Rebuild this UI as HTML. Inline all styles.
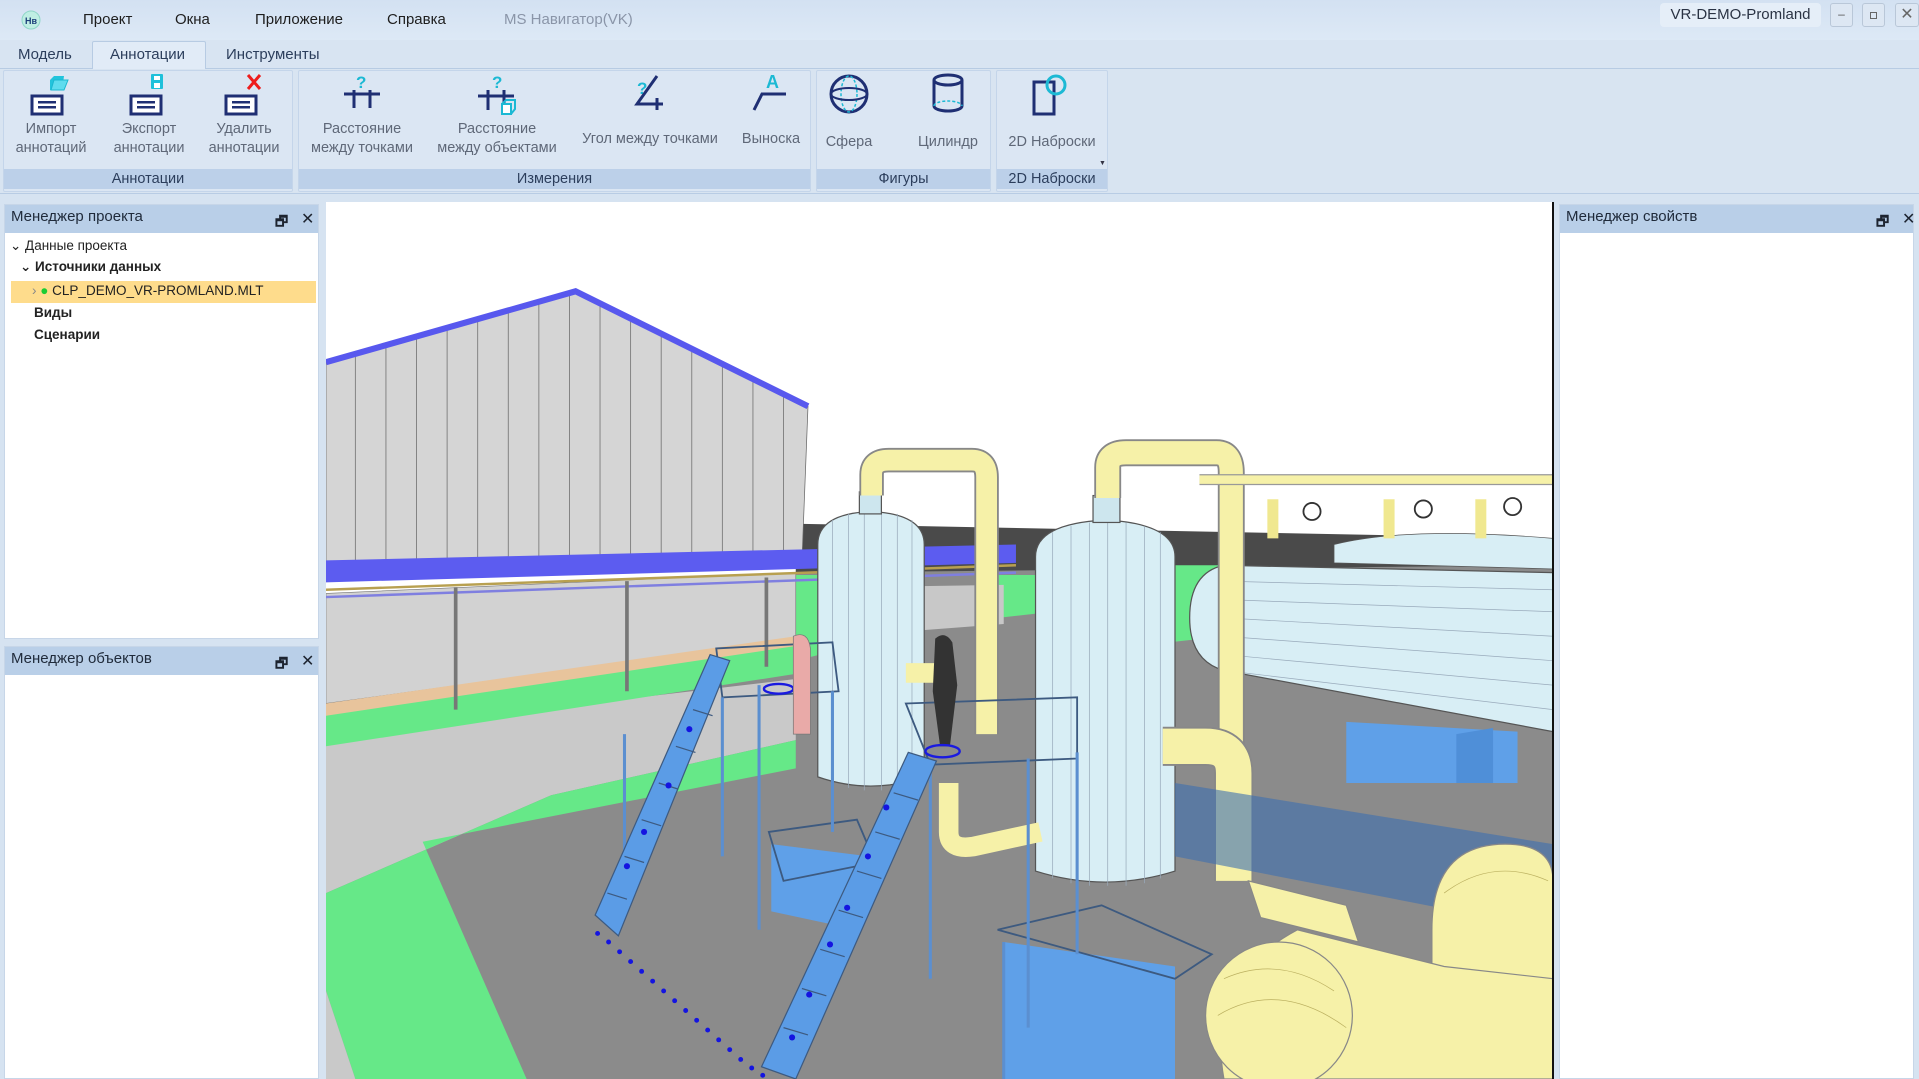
<!DOCTYPE html>
<html><head><meta charset="utf-8">
<style>
*{box-sizing:border-box;margin:0;padding:0}
body{width:1919px;height:1079px;overflow:hidden;background:#d6e3f1;font-family:"Liberation Sans","DejaVu Sans",sans-serif;position:relative;color:#222}
.abs{position:absolute}
#title{left:0;top:0;width:1919px;height:40px;background:linear-gradient(#d3e1f2,#dde9f6)}
.menu{top:11px;font-size:15px;color:#1e1e1e}
#tabs{left:0;top:40px;width:1919px;height:29px;background:#d8e4f2;border-bottom:1px solid #b7cbe3}
.tab{top:46px;font-size:15px;color:#2c3e5c}
#ribbon{left:0;top:69px;width:1919px;height:125px;background:#d8e4f1;border-bottom:1px solid #b8cce4}
.grp{top:70px;height:122px;background:#dbe6f3;border:1px solid #c4d5ea;border-radius:2px}
.glab{position:absolute;left:0;right:0;bottom:2px;height:20px;background:#bcd0e9;text-align:center;font-size:14.5px;color:#2c3e5c;line-height:20px}
.btn{position:absolute;text-align:center;font-size:14.5px;color:#5f6878;line-height:19px;white-space:nowrap}
.ic{position:absolute}
.phead{background:#b9cfe8;height:28px;font-size:15px;color:#1f2a3a;line-height:24px;padding-left:6px}
.pbtn{position:absolute;top:6px;font-size:14px;font-weight:bold;color:#1d2430}
.tree{font-size:13.5px;position:absolute;white-space:nowrap}
</style></head><body>
<div id="title" class="abs"></div>
<svg class="abs" style="left:21px;top:10px" width="20" height="20"><circle cx="10" cy="10" r="9" fill="#bfeee3" stroke="#8fd6c8"/><text x="4" y="14" font-size="9" fill="#1b3e7a" font-family="Liberation Sans" font-weight="bold">Hв</text></svg>
<div class="abs menu" style="left:83px">Проект</div>
<div class="abs menu" style="left:175px">Окна</div>
<div class="abs menu" style="left:255px">Приложение</div>
<div class="abs menu" style="left:387px">Справка</div>
<div class="abs menu" style="left:504px;color:#8a95a8">MS Навигатор(VK)</div>
<div class="abs" style="left:1660px;top:3px;width:161px;height:24px;background:#e5eef8;border-radius:4px;font-size:15px;line-height:24px;text-align:center;color:#2a3344">VR-DEMO-Promland</div>
<div class="abs" style="left:1830px;top:3px;width:23px;height:24px;border:1px solid #b9c7d8;border-radius:3px;background:#dde7f3;text-align:center;font-size:12px;line-height:20px;color:#555">–</div>
<div class="abs" style="left:1862px;top:3px;width:23px;height:24px;border:1px solid #b9c7d8;border-radius:3px;background:#dde7f3"><div style="margin:8px auto;width:7px;height:7px;border:1px solid #666"></div></div>
<div class="abs" style="left:1895px;top:3px;width:24px;height:24px;border:1px solid #b9c7d8;border-radius:3px;background:#dde7f3;text-align:center;font-size:16px;line-height:22px;color:#666">✕</div>

<div id="tabs" class="abs"></div>
<div class="abs" style="left:92px;top:41px;width:114px;height:29px;background:#e1ebf7;border:1px solid #b7cbe3;border-bottom:none;border-radius:2px 2px 0 0"></div>
<div class="abs tab" style="left:18px">Модель</div>
<div class="abs tab" style="left:110px">Аннотации</div>
<div class="abs tab" style="left:226px">Инструменты</div>

<div id="ribbon" class="abs"></div>
<div class="abs grp" style="left:3px;width:290px"><div class="glab">Аннотации</div></div>
<div class="abs grp" style="left:298px;width:513px"><div class="glab">Измерения</div></div>
<div class="abs grp" style="left:816px;width:175px"><div class="glab">Фигуры</div></div>
<div class="abs grp" style="left:996px;width:112px"><div class="glab">2D Наброски</div></div>

<!-- annotation icons -->
<svg class="ic" style="left:26px;top:72px" width="50" height="45"><path d="M24 8 L28 4 L38 4 L36 18 L24 18 Z" fill="#22c4dc"/><path d="M28 8 L42 8 L38 18 L25 18Z" fill="#5fdcee" stroke="#1bb8d0"/><rect x="6" y="24" width="30" height="18" fill="#fff" stroke="#1f2f73" stroke-width="3"/><rect x="12" y="29" width="18" height="2.5" fill="#1f2f73"/><rect x="12" y="34" width="18" height="2.5" fill="#1f2f73"/></svg>
<svg class="ic" style="left:125px;top:72px" width="50" height="45"><rect x="26" y="2" width="12" height="15" rx="1" fill="#1fc0da"/><rect x="29" y="4" width="6" height="4" fill="#fff"/><rect x="29" y="11" width="6" height="5" fill="#fff"/><rect x="6" y="24" width="30" height="18" fill="#fff" stroke="#1f2f73" stroke-width="3"/><rect x="12" y="29" width="18" height="2.5" fill="#1f2f73"/><rect x="12" y="34" width="18" height="2.5" fill="#1f2f73"/></svg>
<svg class="ic" style="left:220px;top:72px" width="50" height="45"><path d="M28 3 L40 17 M40 3 L28 17" stroke="#ee1c1c" stroke-width="3"/><rect x="6" y="24" width="30" height="18" fill="#fff" stroke="#1f2f73" stroke-width="3"/><rect x="12" y="29" width="18" height="2.5" fill="#1f2f73"/><rect x="12" y="34" width="18" height="2.5" fill="#1f2f73"/></svg>
<div class="btn" style="left:6px;top:120px;width:90px">Импорт<br>аннотаций</div>
<div class="btn" style="left:104px;top:120px;width:90px">Экспорт<br>аннотации</div>
<div class="btn" style="left:199px;top:120px;width:90px">Удалить<br>аннотации</div>

<!-- measure icons -->
<svg class="ic" style="left:338px;top:72px" width="50" height="45"><text x="18" y="16" font-size="17" font-weight="bold" fill="#1cb9d4" font-family="Liberation Sans">?</text><path d="M6 22 H42 M16 18 V36 M32 18 V36" stroke="#1f2f73" stroke-width="3" fill="none"/></svg>
<svg class="ic" style="left:472px;top:72px" width="50" height="45"><text x="20" y="16" font-size="17" font-weight="bold" fill="#1cb9d4" font-family="Liberation Sans">?</text><path d="M6 24 H42 M16 18 V38 M32 18 V32" stroke="#1f2f73" stroke-width="3" fill="none"/><rect x="30" y="32" width="9" height="10" fill="#fff" stroke="#1cb9d4" stroke-width="2"/><path d="M30 32 L34 28 H43 V37 L39 42" fill="none" stroke="#1cb9d4" stroke-width="2"/></svg>
<svg class="ic" style="left:625px;top:70px" width="50" height="45"><text x="12" y="24" font-size="17" font-weight="bold" fill="#1cb9d4" font-family="Liberation Sans">?</text><path d="M32 6 L12 34 H38 M32 28 V40" stroke="#1f2f73" stroke-width="3" fill="none"/></svg>
<svg class="ic" style="left:746px;top:70px" width="50" height="45"><text x="20" y="18" font-size="18" font-weight="bold" fill="#1cb9d4" font-family="Liberation Sans">A</text><path d="M8 40 L16 24 H40" stroke="#1f2f73" stroke-width="3" fill="none"/></svg>
<div class="btn" style="left:302px;top:120px;width:120px">Расстояние<br>между точками</div>
<div class="btn" style="left:432px;top:120px;width:130px">Расстояние<br>между объектами</div>
<div class="btn" style="left:575px;top:130px;width:150px">Угол между точками</div>
<div class="btn" style="left:736px;top:130px;width:70px">Выноска</div>

<svg class="ic" style="left:826px;top:72px" width="48" height="48"><circle cx="23" cy="22" r="18" fill="none" stroke="#1f2f73" stroke-width="3"/><ellipse cx="23" cy="22" rx="8" ry="18" fill="none" stroke="#1cb9d4" stroke-width="1.5" stroke-dasharray="3 2"/><ellipse cx="23" cy="22" rx="18" ry="6" fill="none" stroke="#1f2f73" stroke-width="2"/></svg>
<svg class="ic" style="left:926px;top:72px" width="48" height="48"><ellipse cx="22" cy="8" rx="14" ry="5" fill="none" stroke="#1f2f73" stroke-width="3"/><path d="M8 8 V34 A14 5 0 0 0 36 34 V8" fill="none" stroke="#1f2f73" stroke-width="3"/><path d="M8 34 A14 5 0 0 1 36 34" fill="none" stroke="#1cb9d4" stroke-width="1.5" stroke-dasharray="3 2"/></svg>
<div class="btn" style="left:814px;top:133px;width:70px">Сфера</div>
<div class="btn" style="left:913px;top:133px;width:70px">Цилиндр</div>

<svg class="ic" style="left:1028px;top:72px" width="48" height="48"><rect x="6" y="10" width="20" height="32" fill="none" stroke="#1f2f73" stroke-width="3"/><circle cx="28" cy="13" r="9" fill="none" stroke="#1cb9d4" stroke-width="3"/></svg>
<div class="btn" style="left:1000px;top:133px;width:104px">2D Наброски</div>
<div class="abs" style="left:1099px;top:160px;font-size:7px;color:#334">▼</div>

<!-- left panels -->
<div class="abs" style="left:4px;top:204px;width:315px;height:435px;background:#fff;border:1px solid #c7d6e8">
<div class="phead">Менеджер проекта</div>
<div class="pbtn" style="left:270px">🗗</div><div class="pbtn" style="left:296px;font-size:16px;top:4px">✕</div>
</div>
<div class="abs" style="left:11px;top:281px;width:305px;height:22px;background:#fedc8c"></div>
<div class="tree" style="left:10px;top:238px">⌄ Данные проекта</div>
<div class="tree" style="left:20px;top:259px;font-weight:bold">⌄ Источники данных</div>
<div class="tree" style="left:32px;top:283px"><span style="color:#888">›</span> <span style="color:#1bcc33">●</span> CLP_DEMO_VR-PROMLAND.MLT</div>
<div class="tree" style="left:34px;top:305px;font-weight:bold">Виды</div>
<div class="tree" style="left:34px;top:327px;font-weight:bold">Сценарии</div>

<div class="abs" style="left:4px;top:646px;width:315px;height:433px;background:#fff;border:1px solid #c7d6e8">
<div class="phead">Менеджер объектов</div>
<div class="pbtn" style="left:270px">🗗</div><div class="pbtn" style="left:296px;font-size:16px;top:4px">✕</div>
</div>

<!-- right panel -->
<div class="abs" style="left:1559px;top:204px;width:355px;height:875px;background:#fff;border:1px solid #c7d6e8">
<div class="phead">Менеджер свойств</div>
<div class="pbtn" style="left:316px">🗗</div><div class="pbtn" style="left:342px;font-size:16px;top:4px">✕</div>
</div>

<!-- viewport -->
<svg class="abs" style="left:326px;top:202px" width="1227" height="877" viewBox="266 165 1003 717" preserveAspectRatio="none">
<rect x="266" y="165" width="1003" height="717" fill="#fff"/>
<polygon points="650,428 1269,440 1269,472 650,468" fill="#4a4a4a"/>
<polygon points="266,520 650,468 1269,462 1269,882 266,882" fill="#8b8b8b"/>
<polygon points="650,470 690,470 690,530 650,540" fill="#66e888"/>
<polygon points="815,470 860,470 860,500 815,505" fill="#66e888"/>
<polygon points="955,462 1000,462 1000,520 955,525" fill="#66e888"/>
<polygon points="690,480 820,478 820,510 690,520" fill="#c8c8c8"/>
<polygon points="266,600 650,555 650,605 450,650 266,730" fill="#c9c9c9"/>
<polygon points="266,575 650,525 655,550 266,610" fill="#66e888"/>
<polygon points="266,730 450,650 650,605 650,628 345,688 430,882 290,882 266,810" fill="#66e888"/>
<polygon points="266,810 290,882 266,882" fill="#c9c9c9"/>
<!-- building -->
<polygon points="266,295 470,238 660,332 655,460 266,465" fill="#d5d5d5" stroke="#666" stroke-width="0.6"/>
<g stroke="#777" stroke-width="0.7">
<line x1="290" y1="289" x2="290" y2="465"/><line x1="315" y1="282" x2="315" y2="465"/><line x1="340" y1="275" x2="340" y2="465"/><line x1="365" y1="268" x2="365" y2="465"/><line x1="390" y1="261" x2="390" y2="465"/><line x1="415" y1="254" x2="415" y2="465"/><line x1="440" y1="247" x2="440" y2="465"/><line x1="465" y1="240" x2="465" y2="465"/><line x1="490" y1="248" x2="490" y2="465"/><line x1="515" y1="260" x2="515" y2="465"/><line x1="540" y1="273" x2="540" y2="465"/><line x1="565" y1="285" x2="565" y2="465"/><line x1="590" y1="297" x2="590" y2="465"/><line x1="615" y1="310" x2="615" y2="465"/><line x1="640" y1="322" x2="640" y2="465"/>
</g>
<polygon points="266,485 650,468 650,522 266,575" fill="#d2d2d2" stroke="#777" stroke-width="0.5"/>
<polygon points="266,575 650,520 650,528 266,585" fill="#e8c49c"/>
<polyline points="266,296 470,238 660,332" fill="none" stroke="#5858ee" stroke-width="5"/>
<polygon points="266,458 830,445 830,460 266,476" fill="#5c5cf0"/>
<line x1="266" y1="482" x2="830" y2="462" stroke="#b8a050" stroke-width="2"/>
<line x1="266" y1="488" x2="830" y2="468" stroke="#7f7fe0" stroke-width="2"/>
<g stroke="#777" stroke-width="3"><line x1="372" y1="480" x2="372" y2="580"/><line x1="512" y1="475" x2="512" y2="565"/><line x1="626" y1="472" x2="626" y2="545"/></g>
<!-- tanks -->
<path d="M668,445 Q668,420 711,418 Q755,420 755,445 V635 Q711,650 668,635Z" fill="#d8eef5" stroke="#555" stroke-width="1"/>
<g stroke="#9ab" stroke-width="0.6"><line x1="680" y1="425" x2="680" y2="640"/><line x1="693" y1="420" x2="693" y2="644"/><line x1="706" y1="418" x2="706" y2="646"/><line x1="720" y1="418" x2="720" y2="646"/><line x1="733" y1="420" x2="733" y2="644"/><line x1="745" y1="425" x2="745" y2="640"/></g>
<rect x="702" y="402" width="18" height="18" fill="#cde6ee" stroke="#555"/>
<path d="M846,455 Q846,428 903,425 Q960,428 960,455 V712 Q903,730 846,712Z" fill="#d8eef5" stroke="#555" stroke-width="1"/>
<g stroke="#9ab" stroke-width="0.6"><line x1="860" y1="435" x2="860" y2="718"/><line x1="875" y1="430" x2="875" y2="722"/><line x1="890" y1="427" x2="890" y2="724"/><line x1="905" y1="426" x2="905" y2="724"/><line x1="920" y1="427" x2="920" y2="724"/><line x1="935" y1="430" x2="935" y2="722"/><line x1="948" y1="435" x2="948" y2="718"/></g>
<rect x="893" y="405" width="22" height="22" fill="#cde6ee" stroke="#555"/>
<!-- vessel -->
<path d="M1000,462 L1269,468 L1269,598 L1000,548 Q972,540 972,505 Q972,468 1000,462Z" fill="#d8eef5" stroke="#555"/>
<g stroke="#9ab" stroke-width="0.6"><line x1="1000" y1="475" x2="1269" y2="482"/><line x1="1000" y1="490" x2="1269" y2="500"/><line x1="1000" y1="505" x2="1269" y2="520"/><line x1="1000" y1="520" x2="1269" y2="540"/><line x1="1000" y1="535" x2="1269" y2="560"/><line x1="1000" y1="548" x2="1269" y2="580"/></g>
<path d="M1090,445 Q1150,430 1269,440 V465 L1090,460Z" fill="#d8eef5" stroke="#555" stroke-width="0.6"/>
<!-- yellow pipes -->
<g fill="none" stroke-linecap="butt">
<path d="M712,405 V388 Q712,376 726,376 H794 Q806,376 806,390 V600" stroke="#888" stroke-width="20"/>
<path d="M712,405 V388 Q712,376 726,376 H794 Q806,376 806,390 V600" stroke="#f6f1a8" stroke-width="17"/>
<path d="M905,407 V382 Q905,370 920,370 H994 Q1006,370 1006,386 V720" stroke="#888" stroke-width="22"/>
<path d="M905,407 V382 Q905,370 920,370 H994 Q1006,370 1006,386 V720" stroke="#f6f1a8" stroke-width="19"/>
<path d="M980,392 H1269" stroke="#999" stroke-width="9"/><path d="M980,392 H1269" stroke="#f6f1a8" stroke-width="7"/>
<path d="M950,610 H985 Q1008,610 1008,632 V720" stroke="#888" stroke-width="32"/>
<path d="M950,610 H985 Q1008,610 1008,632 V720" stroke="#f6f1a8" stroke-width="29"/>
<path d="M740,550 H770 M775,640 V680 Q775,695 795,692 L850,680" stroke="#f6f1a8" stroke-width="16"/>
<path d="M1040,408 V440 M1135,408 V440 M1210,408 V440" stroke="#f0e890" stroke-width="9"/>
</g>
<g fill="none" stroke="#333" stroke-width="1.5"><circle cx="1072" cy="418" r="7"/><circle cx="1163" cy="416" r="7"/><circle cx="1236" cy="414" r="7"/></g>
<!-- blue floors -->
<polygon points="1100,590 1240,598 1240,640 1100,640" fill="#5fa0e8"/>
<polygon points="1190,600 1220,595 1220,640 1190,640" fill="#4f8fd8"/>
<polygon points="820,770 960,790 960,882 820,882" fill="#5fa0e8"/>
<polygon points="630,690 710,700 700,760 630,745" fill="#5fa0e8"/>
<polygon points="960,640 1269,690 1269,760 960,700" fill="#3d6fb0" opacity="0.6"/>
<!-- big yellow bottom right -->
<g fill="#f6f1a8" stroke="#888" stroke-width="1">
<path d="M1170,760 Q1170,690 1230,690 Q1269,690 1269,720 V882 H1170Z"/>
<path d="M1060,760 L1180,790 L1269,800 V882 H1000 Q985,800 1060,760Z"/>
<ellipse cx="1045" cy="830" rx="60" ry="60"/>
<path d="M1020,720 L1100,740 L1110,770 L1030,750Z"/>
</g>
<g stroke="#bbb060" stroke-width="0.6" fill="none"><path d="M1000,800 Q1045,780 1090,810"/><path d="M995,830 Q1045,800 1100,840"/><path d="M1180,730 Q1220,700 1265,720"/></g>
<!-- platforms & railings -->
<g fill="none" stroke="#3d5a80" stroke-width="1.5">
<polygon points="585,530 680,525 685,565 590,570"/>
<polygon points="740,575 880,570 880,620 760,625"/>
<polygon points="628,680 700,670 715,705 640,720"/>
<polygon points="815,760 900,740 990,780 960,800"/>
</g>
<g stroke="#5b8fd0" stroke-width="2.5">
<line x1="590" y1="570" x2="590" y2="700"/><line x1="680" y1="565" x2="680" y2="680"/><line x1="620" y1="560" x2="620" y2="760"/>
<line x1="760" y1="625" x2="760" y2="800"/><line x1="840" y1="620" x2="840" y2="840"/><line x1="880" y1="615" x2="880" y2="780"/>
<line x1="510" y1="600" x2="510" y2="730"/><line x1="820" y1="770" x2="820" y2="882"/>
</g>
<polygon points="486,748 580,535 596,540 505,765" fill="#5b9ce6" stroke="#3d5a80"/>
<polygon points="622,872 742,615 765,622 650,882" fill="#5b9ce6" stroke="#3d5a80"/>
<g stroke="#3d5a80" stroke-width="1"><line x1="496" y1="730" x2="512" y2="735"/><line x1="510" y1="700" x2="526" y2="705"/><line x1="524" y1="670" x2="540" y2="675"/><line x1="538" y1="640" x2="554" y2="645"/><line x1="552" y1="610" x2="568" y2="615"/><line x1="566" y1="580" x2="582" y2="585"/>
<line x1="640" y1="840" x2="660" y2="846"/><line x1="655" y1="808" x2="675" y2="814"/><line x1="670" y1="776" x2="690" y2="782"/><line x1="685" y1="744" x2="705" y2="750"/><line x1="700" y1="712" x2="720" y2="718"/><line x1="715" y1="680" x2="735" y2="686"/><line x1="730" y1="648" x2="750" y2="654"/></g>
<g fill="#1414e0">
<circle cx="488" cy="763" r="2"/><circle cx="497" cy="770" r="2"/><circle cx="506" cy="778" r="2"/><circle cx="515" cy="786" r="2"/><circle cx="524" cy="794" r="2"/><circle cx="533" cy="802" r="2"/><circle cx="542" cy="810" r="2"/><circle cx="551" cy="818" r="2"/><circle cx="560" cy="826" r="2"/><circle cx="569" cy="834" r="2"/><circle cx="578" cy="842" r="2"/><circle cx="587" cy="850" r="2"/><circle cx="596" cy="858" r="2"/><circle cx="605" cy="866" r="2"/><circle cx="614" cy="873" r="2"/><circle cx="623" cy="879" r="2"/>
<circle cx="563" cy="596" r="2.5"/><circle cx="546" cy="642" r="2.5"/><circle cx="526" cy="680" r="2.5"/><circle cx="512" cy="708" r="2.5"/><circle cx="724" cy="660" r="2.5"/><circle cx="709" cy="700" r="2.5"/><circle cx="692" cy="742" r="2.5"/><circle cx="678" cy="772" r="2.5"/><circle cx="661" cy="813" r="2.5"/><circle cx="647" cy="848" r="2.5"/>
</g>
<path d="M764,522 Q772,515 778,525 L782,560 L776,610 L768,610 L762,565Z" fill="#333"/>
<ellipse cx="770" cy="614" rx="14" ry="5" fill="none" stroke="#1a1ae0" stroke-width="2"/>
<ellipse cx="636" cy="563" rx="12" ry="4" fill="none" stroke="#1a1ae0" stroke-width="2"/>
<path d="M648,520 Q660,515 662,530 V600 H648Z" fill="#e9aaa8" stroke="#777" stroke-width="0.6"/>
</svg>
<div class="abs" style="left:1552px;top:202px;width:2px;height:877px;background:#111"></div>
</body></html>
